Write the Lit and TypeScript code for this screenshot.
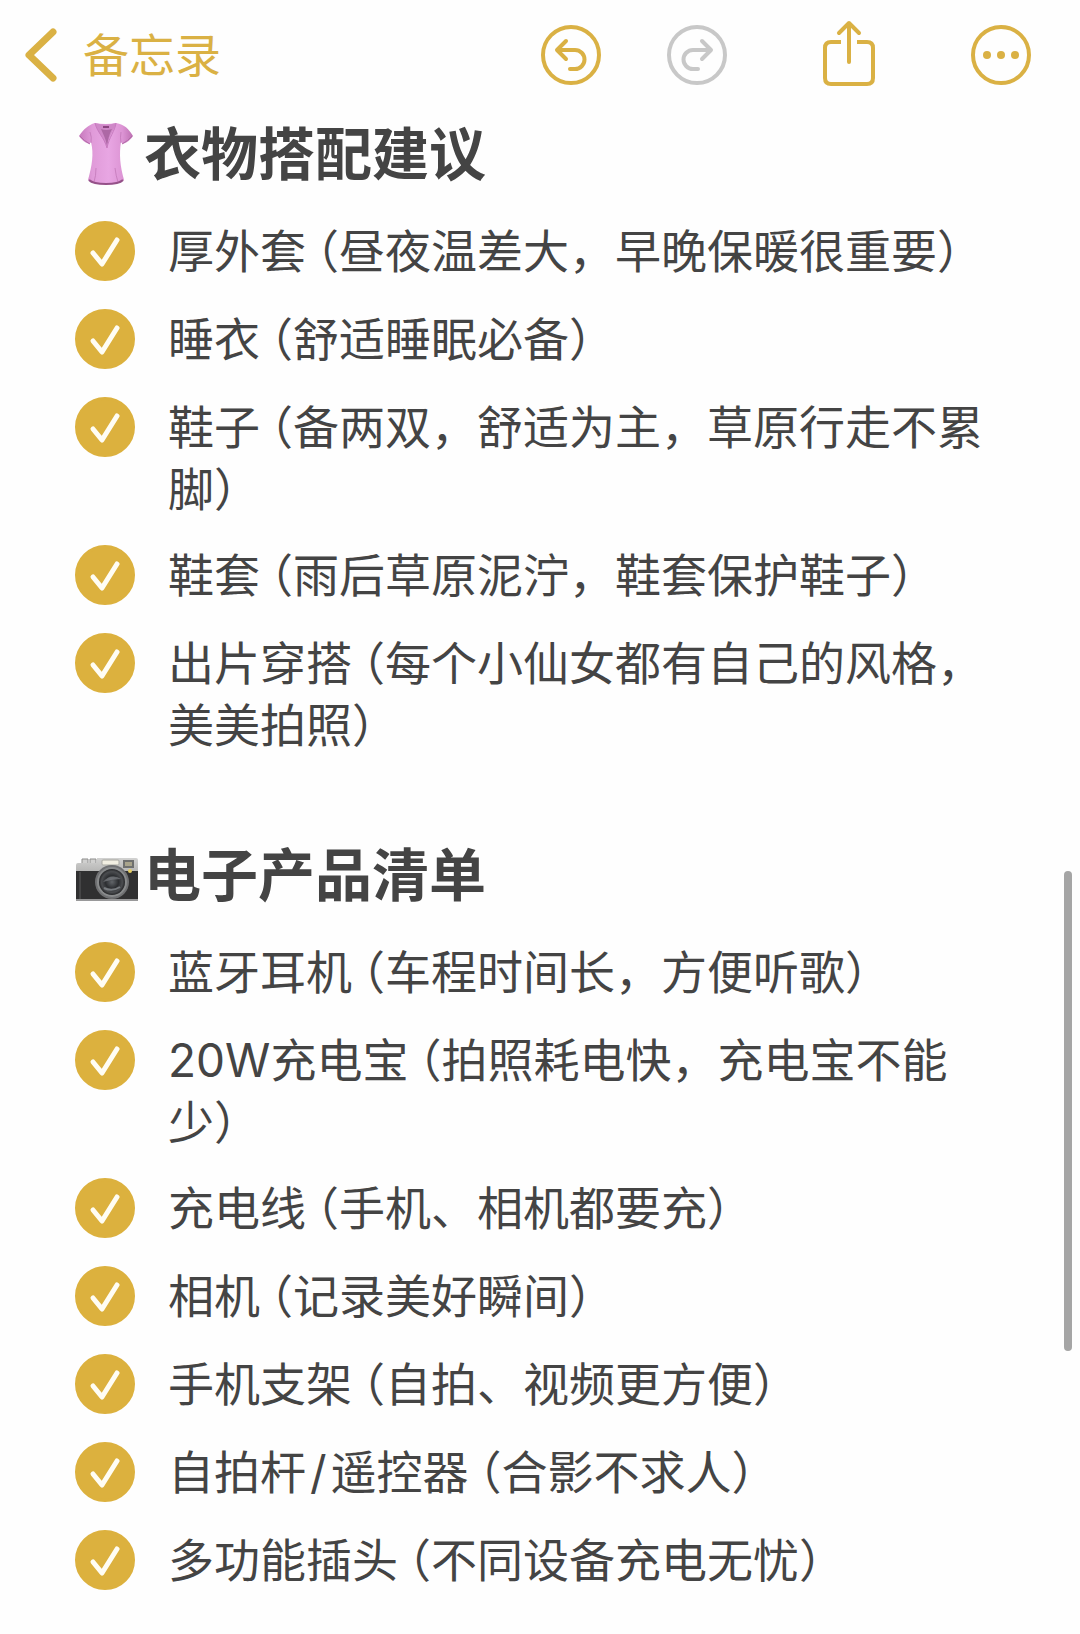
import { LitElement, html, css, svg } from "lit";
import { customElement, property, state } from "lit/decorators.js";

interface Entry {
  text: string;
  done: boolean;
}

interface Section {
  icon: "blouse" | "camera";
  title: string;
  entries: Entry[];
}

const done = (text: string): Entry => ({ text, done: true });

const SECTIONS: Section[] = [
  {
    icon: "blouse",
    title: "衣物搭配建议",
    entries: [
      done("厚外套（昼夜温差大，早晚保暖很重要）"),
      done("睡衣（舒适睡眠必备）"),
      done("鞋子（备两双，舒适为主，草原行走不累脚）"),
      done("鞋套（雨后草原泥泞，鞋套保护鞋子）"),
      done("出片穿搭（每个小仙女都有自己的风格，美美拍照）"),
    ],
  },
  {
    icon: "camera",
    title: "电子产品清单",
    entries: [
      done("蓝牙耳机（车程时间长，方便听歌）"),
      done("20W充电宝（拍照耗电快，充电宝不能少）"),
      done("充电线（手机、相机都要充）"),
      done("相机（记录美好瞬间）"),
      done("手机支架（自拍、视频更方便）"),
      done("自拍杆/遥控器（合影不求人）"),
      done("多功能插头（不同设备充电无忧）"),
    ],
  },
];

const blouse = svg`
  <defs>
    <linearGradient id="cloth" x1="0" x2="1" y1="0" y2="0">
      <stop offset="0" stop-color="#c779bd"></stop>
      <stop offset="0.25" stop-color="#e09bd9"></stop>
      <stop offset="0.55" stop-color="#e8a6e3"></stop>
      <stop offset="0.8" stop-color="#dd95d5"></stop>
      <stop offset="1" stop-color="#bd70b2"></stop>
    </linearGradient>
  </defs>
  <path d="M20 3 C13 5 9 9 4 16 Q7 21 14 24 L16 22 C19 34 17 46 13 60 Q18 64 31 64 Q44 64 49 60 C45 46 44 34 46 22 L48 24 Q55 21 58 16 C53 8 50 5 41 3 Q31 5 20 3Z" fill="url(#cloth)"></path>
  <path d="M20 3 Q31 6 41 3 C40 9 35 12 32 27 C29 18 22 12 20 3Z" fill="#cf88c8"></path>
  <path d="M26 9 Q31 11 37 9 C34 14 33 20 32 26 C31 19 28 14 26 9Z" fill="#ad68a5"></path>
  <path d="M28 6h6v2h-6z" fill="#8a4480"></path>
  <path d="M20 3 C22 12 29 17 32 28 C34 17 40 11 41 3" fill="none" stroke="#c77abf"></path>
  <path d="M14 60 Q18 64 31 64 Q44 64 48 60" fill="none" stroke="#955189" stroke-width="2"></path>
  <path d="M5 16 Q9 21 15 24 M57 16 Q53 21 47 24" fill="none" stroke="#b16aa7" stroke-width="1"></path>
  <path d="M15 12 Q17 17 16 23 M46 12 Q45 17 46 23 M21 48 Q21 56 19 62 M40 48 Q41 56 43 62" fill="none" stroke="#bd73b3" stroke-width="1" opacity="0.7"></path>
`;

const camera = svg`
  <defs>
    <linearGradient id="metal" x1="0" x2="0" y1="0" y2="1">
      <stop offset="0" stop-color="#d2d2d1"></stop>
      <stop offset="1" stop-color="#b5b5b4"></stop>
    </linearGradient>
    <radialGradient id="glass">
      <stop offset="0" stop-color="#62666a"></stop>
      <stop offset="0.5" stop-color="#2c2e31"></stop>
      <stop offset="0.8" stop-color="#4b4d50"></stop>
      <stop offset="1" stop-color="#252628"></stop>
    </radialGradient>
  </defs>
  <g transform="translate(0 7)">
    <path d="M7 15v-4h6v4M15 15v-4h6v4" fill="#d0d0cf" stroke="#8d8d8c" stroke-width="1"></path>
    <path d="M1 17 Q1 15 3 15 L21 15 L22 10 L61 10 Q63 10 63 12 L63 24 L1 24Z" fill="url(#metal)"></path>
    <path d="M1 23H63V51Q63 53 61 53H3Q1 53 1 51Z" fill="#303031"></path>
    <path d="M5 24v28" stroke="#454546" stroke-width="2"></path>
    <rect x="27" y="12" width="17" height="5" rx="1" fill="#f2efe2" stroke="#a9a9a2" stroke-width="1"></rect>
    <rect x="48" y="12" width="11" height="8" fill="#6f706f"></rect>
    <rect x="50" y="14" width="7" height="4" fill="#a9a48c"></rect>
    <path d="M1 52H63" stroke="#99999a" stroke-width="2"></path>
    <circle cx="37" cy="34" r="17" fill="#6f7072"></circle>
    <circle cx="37" cy="34" r="15" fill="#898b8c"></circle>
    <circle cx="37" cy="34" r="13" fill="url(#glass)"></circle>
    <path d="M28 34 Q36 25 46 31 Q37 31 28 34Z" fill="#85898d" opacity="0.6"></path>
    <path d="M29 40 Q37 44 45 39" fill="none" stroke="#777b7f" stroke-width="2"></path>
    <circle cx="55" cy="23" r="2" fill="#e4cd62"></circle>
  </g>
`;

@customElement("note-entry")
export class NoteEntry extends LitElement {
  @property() text = "";
  @property({ type: Boolean }) done = false;

  static styles = css`
    :host {
      display: block;
    }
    .row {
      display: grid;
      grid-template-columns: 60px 1fr;
      column-gap: 33px;
      align-items: start;
      min-height: 64px;
      cursor: pointer;
    }
    .tick {
      display: grid;
      padding-top: 1px;
    }
    .box,
    .mark {
      grid-area: 1 / 1;
      width: 60px;
      height: 60px;
    }
    .box {
      appearance: none;
      margin: 0;
      border: 3px solid #c8c8c8;
      border-radius: 50%;
      box-sizing: border-box;
    }
    .box:checked {
      border-color: #dcb13e;
      background: #dcb13e;
    }
    .mark {
      pointer-events: none;
    }
    .text {
      font-size: 46px;
      line-height: 62px;
    }
    .bracket {
      font-feature-settings: "halt";
    }
    .open {
      margin-left: 10px;
    }
    .slash {
      margin: 0 4px;
    }
  `;

  private toggle(event: Event) {
    this.done = (event.target as HTMLInputElement).checked;
  }

  private piece(part: string) {
    if (part === "（") return html`<span class="bracket open">（</span>`;
    if (part === "）") return html`<span class="bracket">）</span>`;
    if (part === "/") return html`<span class="slash">/</span>`;
    return part;
  }

  render() {
    const parts = this.text.split(/([（）/])/).filter(Boolean);
    return html`<label class="row">
      <span class="tick">
        <input class="box" type="checkbox" .checked=${this.done} @change=${this.toggle} />
        <svg class="mark" viewBox="0 0 60 60" aria-hidden="true">
          <path d="M18 32 L27 43 L42 19" fill="none" stroke="#fffdf4" stroke-width="5" stroke-linecap="round" stroke-linejoin="round"></path>
        </svg>
      </span>
      <span class="text">${parts.map((part) => this.piece(part))}</span>
    </label>`;
  }
}

@customElement("app-root")
export class AppRoot extends LitElement {
  @state() private sections = SECTIONS;

  static styles = css`
    :host {
      display: block;
      position: relative;
      box-sizing: border-box;
      min-height: 100vh;
      background: #fefefe;
      color: #444444;
      font-family: Inter, "Noto Sans CJK SC", sans-serif;
    }
    .bar {
      display: flex;
      align-items: center;
      justify-content: space-between;
      height: 110px;
      padding: 0 49px 0 24px;
      color: #dab144;
    }
    .action {
      display: flex;
      align-items: center;
      margin: 0;
      padding: 0;
      border: 0;
      background: none;
      color: inherit;
      font: inherit;
      cursor: pointer;
    }
    .action:disabled {
      color: #c8c8c8;
      cursor: default;
    }
    .back {
      gap: 24px;
      font-size: 46px;
      line-height: 62px;
    }
    .tools,
    .history {
      display: flex;
      align-items: center;
    }
    .tools {
      gap: 92px;
    }
    .history {
      gap: 66px;
    }
    .icon {
      display: block;
      fill: none;
      stroke: currentColor;
      stroke-width: 4;
      stroke-linecap: round;
      stroke-linejoin: round;
    }
    .note {
      display: flex;
      flex-direction: column;
      gap: 85px;
      padding: 10px 72px 42px 75px;
    }
    .heading {
      display: flex;
      align-items: center;
      gap: 5px;
      margin: 0 0 30px;
      font-size: 57px;
      line-height: 70px;
      font-weight: 700;
    }
    .emoji {
      flex: none;
      display: block;
    }
    .list {
      display: flex;
      flex-direction: column;
      gap: 24px;
      margin: 0;
      padding: 0;
      list-style: none;
    }
    .thumb {
      position: absolute;
      top: 53.3%;
      right: 8px;
      width: 8px;
      height: 29.3%;
      border-radius: 4px;
      background: #a5a5a5;
    }
  `;

  render() {
    return html`
      <header class="bar">
        <button class="action back">
          <svg class="icon" width="35" height="60" viewBox="0 0 35 60" aria-hidden="true">
            <path d="M29 7 L5 30 L29 53" stroke-width="7"></path>
          </svg>
          <span>备忘录</span>
        </button>
        <div class="tools">
          <div class="history">
            <button class="action" aria-label="撤销">
              <svg class="icon" width="60" height="60" viewBox="0 0 60 60">
                <circle cx="30" cy="30" r="28"></circle>
                <path d="M25 16 L16 25 L25 34 M17 25 H34 A9.5 9.5 0 0 1 34 44 H29"></path>
              </svg>
            </button>
            <button class="action" aria-label="重做" disabled>
              <svg class="icon" width="60" height="60" viewBox="0 0 60 60">
                <circle cx="30" cy="30" r="28"></circle>
                <path d="M35 16 L44 25 L35 34 M43 25 H26 A9.5 9.5 0 0 0 26 44 H31"></path>
              </svg>
            </button>
          </div>
          <button class="action" aria-label="共享">
            <svg class="icon" width="60" height="70" viewBox="0 0 60 70">
              <path d="M22 22 H12 Q6 22 6 28 V58 Q6 64 12 64 H48 Q54 64 54 58 V28 Q54 22 48 22 H38" stroke-linecap="butt"></path>
              <path d="M30 42 V3 M20 13 L30 3 L40 13"></path>
            </svg>
          </button>
          <button class="action" aria-label="更多">
            <svg class="icon" width="60" height="60" viewBox="0 0 60 60">
              <circle cx="30" cy="30" r="28"></circle>
              <g fill="currentColor" stroke="none">
                <circle cx="16" cy="30" r="4"></circle>
                <circle cx="30" cy="30" r="4"></circle>
                <circle cx="44" cy="30" r="4"></circle>
              </g>
            </svg>
          </button>
        </div>
      </header>
      <main class="note">
        ${this.sections.map(
          (section) => html`<section>
            <h2 class="heading">
              <svg class="emoji" width="64" height="70" viewBox="0 0 64 70" aria-hidden="true">
                ${section.icon === "blouse" ? blouse : camera}
              </svg>
              <span>${section.title}</span>
            </h2>
            <ul class="list">
              ${section.entries.map(
                (entry) => html`<li><note-entry .text=${entry.text} .done=${entry.done}></note-entry></li>`,
              )}
            </ul>
          </section>`,
        )}
      </main>
      <div class="thumb" aria-hidden="true"></div>
    `;
  }
}
